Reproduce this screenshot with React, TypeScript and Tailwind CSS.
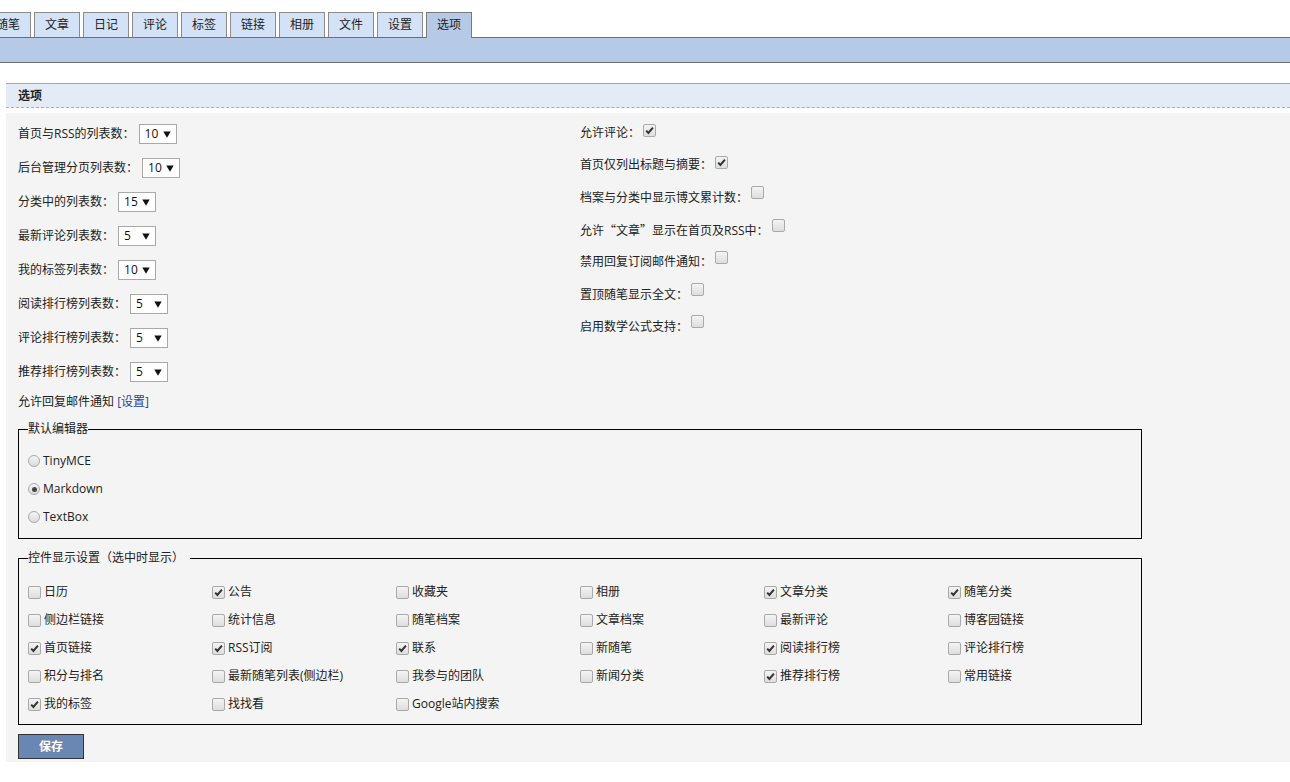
import React from "react";

const FONT = "font-['Open_Sans','Noto_Sans_CJK_SC',sans-serif]";

function Cb({ checked }: { checked?: boolean }) {
  return (
    <span className="inline-flex w-[13px] h-[13px] shrink-0 items-center justify-center rounded-[2px] border border-[#a9a9a9] bg-linear-to-b from-[#f4f4f4] to-[#dedede]">
      {checked && (
        <svg width="9" height="9" viewBox="0 0 9 9">
          <path d="M1.2 4.6 L3.4 7 L7.9 1.6" stroke="#333" strokeWidth="2" fill="none" />
        </svg>
      )}
    </span>
  );
}

function Radio({ checked }: { checked?: boolean }) {
  return (
    <span className="inline-flex w-[12px] h-[12px] shrink-0 items-center justify-center rounded-full border border-[#a9a9a9] bg-linear-to-b from-[#f4f4f4] to-[#dcdcdc]">
      {checked && <span className="w-[5px] h-[5px] rounded-full bg-[#444]" />}
    </span>
  );
}

function Sel({ v }: { v: string }) {
  return (
    <span className="ml-1 flex h-[20px] w-[38px] shrink-0 items-center border border-[#a9a9a9] bg-white pl-[5px] text-[12px] text-[#111]">
      <span className="flex-1">{v}</span>
      <svg className="mr-[5px]" width="8" height="7" viewBox="0 0 8 7">
        <path d="M0.3 0.6 H7.7 L4 6.8 Z" fill="#111" />
      </svg>
    </span>
  );
}

const tabs = ["随笔", "文章", "日记", "评论", "标签", "链接", "相册", "文件", "设置", "选项"];

const leftRows: [string, string][] = [
  ["首页与RSS的列表数：", "10"],
  ["后台管理分页列表数：", "10"],
  ["分类中的列表数：", "15"],
  ["最新评论列表数：", "5"],
  ["我的标签列表数：", "10"],
  ["阅读排行榜列表数：", "5"],
  ["评论排行榜列表数：", "5"],
  ["推荐排行榜列表数：", "5"],
];

const rightRows: [React.ReactNode, boolean][] = [
  ["允许评论：", true],
  ["首页仅列出标题与摘要：", true],
  ["档案与分类中显示博文累计数：", false],
  [
    <>
      允许<span className="font-['Noto_Sans_CJK_SC',sans-serif]">“文章”</span>显示在首页及RSS中：
    </>,
    false,
  ],
  ["禁用回复订阅邮件通知：", false],
  ["置顶随笔显示全文：", false],
  ["启用数学公式支持：", false],
];

const widgets: [string, boolean][] = [
  ["日历", false],
  ["公告", true],
  ["收藏夹", false],
  ["相册", false],
  ["文章分类", true],
  ["随笔分类", true],
  ["侧边栏链接", false],
  ["统计信息", false],
  ["随笔档案", false],
  ["文章档案", false],
  ["最新评论", false],
  ["博客园链接", false],
  ["首页链接", true],
  ["RSS订阅", true],
  ["联系", true],
  ["新随笔", false],
  ["阅读排行榜", true],
  ["评论排行榜", false],
  ["积分与排名", false],
  ["最新随笔列表(侧边栏)", false],
  ["我参与的团队", false],
  ["新闻分类", false],
  ["推荐排行榜", true],
  ["常用链接", false],
  ["我的标签", true],
  ["找找看", false],
  ["Google站内搜索", false],
];

export default function App() {
  return (
    <div className={`${FONT} min-h-[782px] w-[1290px] overflow-hidden bg-white text-[12px] text-[#222]`}>
      {/* tabs */}
      <div className="pt-[12px]">
        <div className="relative z-10 -mb-px ml-[-15px] flex gap-[3px]">
          {tabs.map((t) => {
            const active = t === "选项";
            return (
              <div
                key={t}
                className={
                  active
                    ? "flex h-[26px] w-[46px] items-center justify-center border border-b-0 border-[#7a7a7a] bg-[#b6c9e7] pb-px"
                    : "flex h-[25px] w-[46px] items-center justify-center border border-b-0 border-[#8c8c8c] bg-[#d3e2f6]"
                }
              >
                {t}
              </div>
            );
          })}
        </div>
        <div className="h-[26px] border-y border-[#6f6f6f] bg-[#b6c9e7]" />
      </div>

      {/* section */}
      <div className="ml-[6px] mt-[20px]">
        <div className="flex h-[25px] items-center border-t border-b border-t-[#a8a8a8] border-b-[#b0b0b0] [border-bottom-style:dashed] bg-[#e3ebf6] pl-3 font-bold">
          选项
        </div>
        <div className="mt-[5px] bg-[#f4f4f4] pb-[3px] pl-3">
          <div className="flex pt-[4px]">
            <div className="w-[562px]">
              {leftRows.map(([l, v]) => (
                <div key={l} className="flex h-[34px] items-center">
                  <span>{l}</span>
                  <Sel v={v} />
                </div>
              ))}
              <div className="flex h-[26px] items-center">
                允许回复邮件通知&nbsp;<span className="text-[#1a46a0]">[设置]</span>
              </div>
            </div>
            <div>
              {rightRows.map(([l, c], i) => (
                <div key={i} className="flex h-[32.3px] items-center">
                  <span>{l}</span>
                  <span className="ml-[3px] -mt-[5px]">
                    <Cb checked={c} />
                  </span>
                </div>
              ))}
            </div>
          </div>

          <fieldset className="mt-[6px] w-[1124px] border border-black px-[9px] pb-[7px] pt-[10px]">
            <legend className="leading-[16px]">默认编辑器</legend>
            {[
              ["TinyMCE", false],
              ["Markdown", true],
              ["TextBox", false],
            ].map(([l, c]) => (
              <div key={l as string} className="flex h-[28px] items-center gap-[3px]">
                <Radio checked={c as boolean} />
                <span>{l as string}</span>
              </div>
            ))}
          </fieldset>

          <fieldset className="mt-[11px] w-[1124px] border border-black px-[9px] pb-[6px] pt-[12px]">
            <legend className="pr-[6px] leading-[16px]">控件显示设置（选中时显示）</legend>
            <div className="grid grid-cols-[repeat(6,184px)]">
              {widgets.map(([l, c]) => (
                <div key={l} className="flex h-[28px] items-center gap-[3px]">
                  <Cb checked={c} />
                  <span>{l}</span>
                </div>
              ))}
            </div>
          </fieldset>

          <button className="mt-[9px] flex h-[25px] w-[66px] items-center justify-center border border-[#333] bg-[#6a86b3] font-bold text-white">
            保存
          </button>
        </div>
      </div>
    </div>
  );
}
